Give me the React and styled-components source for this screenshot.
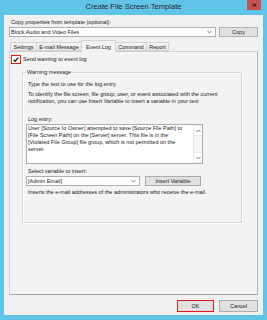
import React from 'react'
import styled, { createGlobalStyle } from 'styled-components'

const GlobalStyle = createGlobalStyle`
  html, body {
    margin: 0;
    padding: 0;
    background: #fff;
  }
  body {
    font-family: "Liberation Sans", Arial, sans-serif;
  }
`

const Chevron = ({ up }) => (
    <svg width='5' height='4' viewBox='0 0 5 4'>
        <polyline
            points={up ? '0.5,3 2.5,1 4.5,3' : '0.5,1 2.5,3 4.5,1'}
            fill='none'
            stroke='#6f6f6f'
            strokeWidth='0.9'
        />
    </svg>
)

const tabs = [
    { label: 'Settings', w: 27 },
    { label: 'E-mail Message', w: 46 },
    { label: 'Event Log', w: 35, active: true },
    { label: 'Command', w: 32 },
    { label: 'Report', w: 23 },
]

const logLines = [
    'User [Source Io Owner] attempted to save [Source File Path] to',
    '[File Screen Path] on the [Server] server. This file is in the',
    '[Violated File Group] file group, which is not permitted on the',
    'server.',
]

const App = () => {
    return <Window>
        <GlobalStyle/>
        <TitleBar>
            <Title>Create File Screen Template</Title>
            <CloseButton>
                <svg width='5' height='4' viewBox='0 0 5 4'>
                    <path d='M0.5 0.3 L4.5 3.7 M4.5 0.3 L0.5 3.7' stroke='#2a1414' strokeWidth='1'/>
                </svg>
            </CloseButton>
        </TitleBar>
        <Body>
            <TopLabel>Copy properties from template (optional):</TopLabel>
            <TemplateRow>
                <Dropdown>
                    <span>Block Audio and Video Files</span>
                    <Chevron/>
                </Dropdown>
                <Button $w={39}>Copy</Button>
            </TemplateRow>
            <TabStrip>
                {tabs.map(t => <Tab key={t.label} $w={t.w} $active={t.active}>{t.label}</Tab>)}
            </TabStrip>
            <Panel>
                <CheckRow>
                    <CheckBox>
                        <svg width='6' height='5' viewBox='0 0 6 5'>
                            <polyline points='0.6,2.6 2.2,4.2 5.4,0.6' fill='none' stroke='#111' strokeWidth='1.3'/>
                        </svg>
                    </CheckBox>
                    <Text>Send warning to event log</Text>
                </CheckRow>
                <Group>
                    <Legend>Warning message</Legend>
                    <Text $indent $top={5}>Type the text to use for the log entry.</Text>
                    <Text $indent $top={3}>
                        To identify the file screen, file group, user, or event associated with the current<br/>
                        notification, you can use Insert Variable to insert a variable in your text
                    </Text>
                    <Text $indent $top={11}>Log entry:</Text>
                    <LogBox>
                        <LogText>
                            {logLines.map(l => <div key={l}>{l}</div>)}
                        </LogText>
                        <ScrollBar>
                            <ScrollArrow><Chevron up/></ScrollArrow>
                            <ScrollArrow><Chevron/></ScrollArrow>
                        </ScrollBar>
                    </LogBox>
                    <Text $indent $top={4}>Select variable to insert:</Text>
                    <VariableRow>
                        <Dropdown $w={114}>
                            <span>[Admin Email]</span>
                            <Chevron/>
                        </Dropdown>
                        <Button $w={56}>Insert Variable</Button>
                    </VariableRow>
                    <Text $indent $top={3}>Inserts the e-mail addresses of the administrators who receive the e-mail.</Text>
                </Group>
            </Panel>
            <Footer>
                <Button $w={37} $marked>OK</Button>
                <Button $w={39}>Cancel</Button>
            </Footer>
        </Body>
    </Window>
}

export default App

const Window = styled.div`
    width: 267px;
    height: 320px;
    background: #60c4e9;
    display: flex;
    flex-direction: column;
`

const TitleBar = styled.div`
    height: 15px;
    flex-shrink: 0;
    display: grid;
    grid-template-columns: 1fr auto 1fr;
    align-items: start;
`

const Title = styled.div`
    grid-column: 2;
    font-size: 7.6px;
    line-height: 14px;
    color: #262626;
    white-space: nowrap;
`

const CloseButton = styled.div`
    grid-column: 3;
    justify-self: end;
    margin-right: 6px;
    width: 14px;
    height: 10px;
    background: #c75050;
    display: flex;
    align-items: center;
    justify-content: center;
`

const Body = styled.div`
    flex: 1;
    min-height: 0;
    margin: 0 4px 5px;
    padding: 4px 5px 3px;
    background: #f0f0f0;
    display: flex;
    flex-direction: column;
`

const Text = styled.div`
    font-size: 5.5px;
    line-height: 7px;
    color: #1a1a1a;
    white-space: nowrap;
    margin-left: ${p => p.$indent ? 5 : 0}px;
    margin-top: ${p => p.$top || 0}px;
`

const TopLabel = styled(Text)`
    line-height: 6px;
    margin-left: 2px;
`

const TemplateRow = styled.div`
    display: flex;
    gap: 3px;
    height: 10px;
    margin-top: 2px;
`

const Dropdown = styled.div`
    flex: ${p => p.$w ? `0 0 ${p.$w}px` : '1'};
    box-sizing: border-box;
    height: 100%;
    background: #fff;
    border: 1px solid #abadb3;
    padding: 0 3px 0 1px;
    display: flex;
    align-items: center;
    justify-content: space-between;
    font-size: 5.5px;
    color: #1a1a1a;
    white-space: nowrap;
`

const Button = styled.div`
    flex: 0 0 ${p => p.$w}px;
    box-sizing: border-box;
    height: 100%;
    background: #e1e1e1;
    border: 1px solid ${p => p.$marked ? '#e3161b' : '#adadad'};
    display: flex;
    align-items: center;
    justify-content: center;
    font-size: 5.5px;
    color: #1a1a1a;
    white-space: nowrap;
`

const TabStrip = styled.div`
    display: flex;
    align-items: flex-end;
    height: 11px;
    margin-top: 3px;
    padding-left: 1px;
    position: relative;
    z-index: 1;
`

const Tab = styled.div`
    flex: 0 0 ${p => p.$w}px;
    box-sizing: border-box;
    height: ${p => p.$active ? 12 : 9}px;
    margin-bottom: ${p => p.$active ? -1 : 0}px;
    margin-right: -1px;
    border: 1px solid #d3d3d3;
    border-bottom: ${p => p.$active ? 'none' : '1px solid #d3d3d3'};
    background: ${p => p.$active ? '#f3f3f3' : 'linear-gradient(#f4f4f4, #e9e9e9)'};
    display: flex;
    align-items: center;
    justify-content: center;
    font-size: 5.5px;
    color: #1a1a1a;
    white-space: nowrap;
`

const Panel = styled.div`
    flex: 1;
    min-height: 0;
    background: #f3f3f3;
    border: 1px solid #d0d0d0;
    border-right-color: #b4b4b4;
    border-bottom-color: #a5a5a5;
    padding: 3px 15px 0 1px;
    display: flex;
    flex-direction: column;
`

const CheckRow = styled.div`
    display: flex;
    align-items: center;
    gap: 2px;
    height: 9px;
`

const CheckBox = styled.div`
    width: 10px;
    height: 9px;
    box-sizing: border-box;
    border: 1px solid #e01f1f;
    background: #fff;
    display: flex;
    align-items: center;
    justify-content: center;
`

const Group = styled.fieldset`
    margin: 5px 0 0 11px;
    padding: 0 0 26px 0;
    min-width: 0;
    border: 1px solid #d6d6d6;
    box-shadow: inset 1px 1px 0 #fff, 1px 1px 0 #fff;
`

const Legend = styled.legend`
    margin-left: 3px;
    padding: 0 1px;
    font-size: 5.5px;
    line-height: 7px;
    color: #1a1a1a;
`

const LogBox = styled.div`
    width: 177px;
    height: 40px;
    box-sizing: border-box;
    margin: 1px 0 0 3px;
    background: #fff;
    border: 1px solid #abadb3;
    display: flex;
`

const LogText = styled.div`
    flex: 1;
    overflow: hidden;
    padding: 0 0 0 1px;
    font-size: 5.5px;
    line-height: 7px;
    color: #1a1a1a;
    white-space: nowrap;
`

const ScrollBar = styled.div`
    width: 8px;
    background: #f7f7f7;
    border-left: 1px solid #e6e6e6;
    display: flex;
    flex-direction: column;
    justify-content: space-between;
`

const ScrollArrow = styled.div`
    height: 9px;
    display: flex;
    align-items: center;
    justify-content: center;
    background: #fdfdfd;
    border-top: 1px solid #eaeaea;
    border-bottom: 1px solid #eaeaea;
`

const VariableRow = styled.div`
    display: flex;
    gap: 5px;
    height: 10px;
    margin: 1px 0 0 3px;
`

const Footer = styled.div`
    display: flex;
    justify-content: flex-end;
    gap: 5px;
    height: 12px;
    margin-top: 5px;
`
